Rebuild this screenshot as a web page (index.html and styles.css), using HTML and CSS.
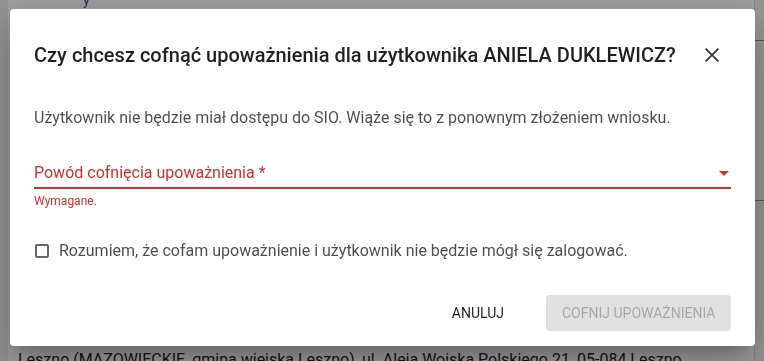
FILE: index.html
```html
<!DOCTYPE html>
<html lang="pl">
<head>
<meta charset="utf-8">
<link rel="stylesheet" href="styles.css">
</head>
<body>
<div class="page">
  <div class="page-main">
    <div class="bg-row top"><span class="bg-top-text">y</span></div>
    <div class="bg-spacer"></div>
    <div class="bg-row bottom">Leszno (MAZOWIECKIE, gmina wiejska Leszno), ul. Aleja Wojska Polskiego 21, 05-084 Leszno</div>
  </div>
  <div class="page-side">
    <div class="side-line l1"></div>
    <div class="side-line l2"></div>
  </div>
</div>
<div class="overlay">
  <div class="dialog">
    <div class="dialog-header">
      <h2 class="dialog-title">Czy chcesz cofnąć upoważnienia dla użytkownika ANIELA DUKLEWICZ?</h2>
      <button class="close-btn" aria-label="Zamknij">
        <svg width="24" height="24" viewBox="0 0 24 24"><path d="M5.6 5.6 18.4 18.4M18.4 5.6 5.6 18.4" stroke="#333" stroke-width="1.7" fill="none"/></svg>
      </button>
    </div>
    <p class="dialog-text">Użytkownik nie będzie miał dostępu do SIO. Wiąże się to z ponownym złożeniem wniosku.</p>
    <div class="field">
      <div class="field-input">
        <span class="field-label">Powód cofnięcia upoważnienia *</span>
        <span class="field-arrow"></span>
      </div>
      <div class="field-error">Wymagane.</div>
    </div>
    <label class="check">
      <span class="check-box"></span>
      <span class="check-label">Rozumiem, że cofam upoważnienie i użytkownik nie będzie mógł się zalogować.</span>
    </label>
    <div class="actions">
      <button class="btn btn-text">ANULUJ</button>
      <button class="btn btn-disabled" disabled>COFNIJ UPOWAŻNIENIA</button>
    </div>
  </div>
</div>
</body>
</html>
```
FILE: styles.css
```css
html, body {
  margin: 0;
  padding: 0;
  width: 764px;
  height: 361px;
  overflow: hidden;
  font-family: Roboto, "Liberation Sans", sans-serif;
}
.page {
  display: flex;
  width: 764px;
  height: 361px;
  background: #fff;
}
.page-main {
  flex: 1;
  display: flex;
  flex-direction: column;
  padding-left: 10px;
  border-left: 8px solid #eee;
  overflow: hidden;
}
.bg-row.top {
  height: 9px;
  color: #1e5aa0;
  font-size: 14px;
  line-height: 0;
  padding-left: 65px;
}
.bg-spacer { flex: 1; }
.bg-row.bottom {
  font-size: 16px;
  color: #222;
  white-space: nowrap;
  line-height: 16px;
  height: 8px;
  overflow: visible;
  transform: translateY(-1px);
}
.page-side {
  width: 9px;
  position: relative;
  background: #f2f2f2;
  border-left: 1px solid #ddd;
}
.side-line {
  position: absolute;
  left: 0;
  right: 0;
  height: 1px;
  background: #888;
}
.side-line.l1 { top: 40px; }
.side-line.l2 { top: 200px; }
.overlay {
  position: fixed;
  inset: 0;
  background: rgba(0, 0, 0, 0.38);
}
.dialog {
  position: absolute;
  left: 10px;
  top: 9px;
  width: 745px;
  height: 337px;
  box-sizing: border-box;
  background: #fff;
  border-radius: 4px;
  box-shadow: 0 11px 15px -7px rgba(0,0,0,.2), 0 24px 38px 3px rgba(0,0,0,.14), 0 9px 46px 8px rgba(0,0,0,.12);
  padding: 30px 24px 15px 24px;
  display: flex;
  flex-direction: column;
}
.dialog-header {
  display: flex;
  align-items: center;
  justify-content: space-between;
}
.dialog-title {
  margin: 0;
  font-size: 20px;
  font-weight: 500;
  line-height: 32px;
  color: rgba(0, 0, 0, 0.87);
}
.close-btn {
  border: 0;
  background: transparent;
  padding: 0;
  width: 24px;
  height: 24px;
  margin-right: 7px;
  display: flex;
}
.dialog-text {
  margin: 35px 0 0 0;
  font-size: 16px;
  line-height: 24px;
  color: rgba(0, 0, 0, 0.7);
}
.field {
  margin-top: 29px;
}
.field-input {
  display: flex;
  align-items: center;
  justify-content: space-between;
  height: 28px;
  border-bottom: 2px solid #d32f2f;
}
.field-label {
  font-size: 16px;
  color: #d32f2f;
  line-height: 24px;
}
.field-arrow {
  width: 0;
  height: 0;
  border-left: 5px solid transparent;
  border-right: 5px solid transparent;
  border-top: 5px solid #d32f2f;
  margin-right: 2px;
}
.field-error {
  font-size: 12px;
  color: #d32f2f;
  margin-top: 5px;
  line-height: 14px;
}
.check {
  display: flex;
  align-items: center;
  margin-top: 31px;
  gap: 10px;
}
.check-box {
  width: 14px;
  height: 14px;
  border: 2px solid #666;
  border-radius: 2px;
  box-sizing: border-box;
  margin-left: 1px;
}
.check-label {
  font-size: 16px;
  line-height: 24px;
  color: rgba(0, 0, 0, 0.7);
}
.actions {
  margin-top: auto;
  display: flex;
  justify-content: flex-end;
  align-items: center;
  gap: 26px;
}
.btn {
  font-family: Roboto, "Liberation Sans", sans-serif;
  font-size: 14px;
  font-weight: 400;
  height: 36px;
  border: 0;
  border-radius: 4px;
  padding: 0 16px;
  white-space: nowrap;
}
.btn-text {
  background: transparent;
  color: rgba(0, 0, 0, 0.87);
}
.btn-disabled {
  background: #e0e0e0;
  color: rgba(0, 0, 0, 0.26);
  width: 185px;
}
```
